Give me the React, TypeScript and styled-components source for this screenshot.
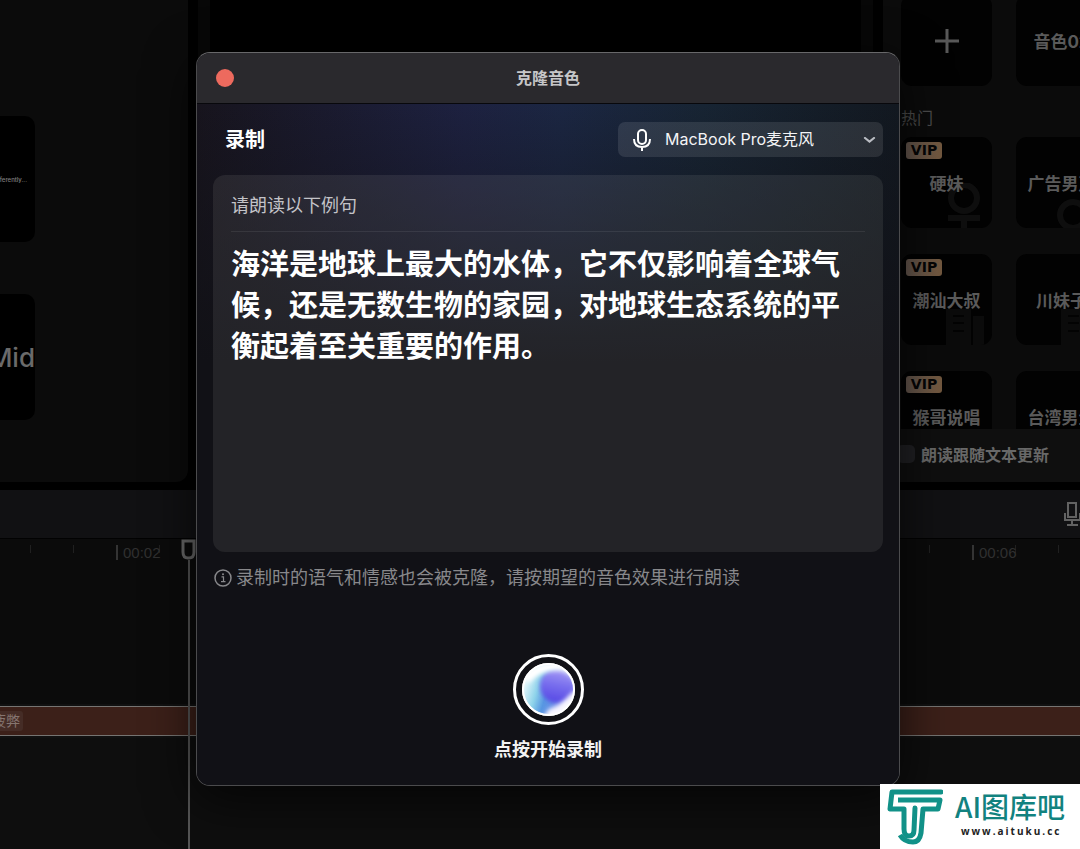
import React from "react";
import styled, { createGlobalStyle, css } from "styled-components";

const GlobalStyle = createGlobalStyle`
  *, *::before, *::after { box-sizing: border-box; }
  html, body, #root { height: 100%; }
  body {
    margin: 0;
    background: #000;
    color: #fff;
    font-family: Inter, "Noto Sans CJK SC", sans-serif;
    overflow: hidden;
  }
  button, select, input { font: inherit; color: inherit; }
  p, h1, h2, ul { margin: 0; padding: 0; }
`;

/* ---------- editor behind the dialog ---------- */

const Editor = styled.div`
  position: relative;
  display: flex;
  flex-direction: column;
  min-height: 100vh;
  overflow: hidden;
`;

const Workspace = styled.div`
  display: flex;
  gap: 10px;
  margin-bottom: 8px;
`;

const MediaPanel = styled.section`
  flex: 0 0 188px;
  display: flex;
  flex-direction: column;
  gap: 52px;
  padding: 116px 0 62px;
  background: #0b0b0b;
  border-bottom-right-radius: 12px;
`;

const Thumb = styled.div<{ $large?: boolean }>`
  display: flex;
  align-items: center;
  justify-content: flex-end;
  width: 35px;
  height: 126px;
  overflow: hidden;
  white-space: nowrap;
  background: #000;
  border-radius: 0 10px 10px 0;
  color: ${(p) => (p.$large ? "#6a6a6a" : "#808080")};
  font-size: ${(p) => (p.$large ? 26 : 6)}px;
  font-weight: 500;
  padding-right: ${(p) => (p.$large ? 0 : 8)}px;
`;

const Player = styled.section`
  flex: 1;
  padding: 0 12px;
  background: #070707;
`;

const Screen = styled.div`
  height: 100%;
  background: #000;
`;

const VoicePanel = styled.section`
  flex: 0 0 197px;
  display: flex;
  flex-direction: column;
  overflow: hidden;
  background: #0b0b0b;
`;

const VoiceScroll = styled.div`
  flex: 1 1 0;
  min-height: 0;
  overflow: hidden;
  padding-left: 18px;
`;

const VoiceGrid = styled.div<{ $first?: boolean }>`
  display: grid;
  grid-template-columns: repeat(2, 91px);
  gap: 26px 24px;
  margin-top: ${(p) => (p.$first ? -5 : 0)}px;
`;

const VoiceCard = styled.button`
  position: relative;
  display: flex;
  align-items: center;
  justify-content: center;
  height: 91px;
  padding: 0;
  border: 0;
  border-radius: 11px;
  overflow: hidden;
  white-space: nowrap;
  background: #020202;
  color: #5a5a5a;
  font-size: 17px;
  font-weight: 700;
`;

const VoiceName = styled.span`
  position: relative;
`;

const VipBadge = styled.span`
  position: absolute;
  top: 5px;
  left: 5px;
  width: 36px;
  height: 17px;
  border-radius: 3px;
  background: linear-gradient(90deg, #65574e, #74593f);
  color: #050505;
  font: bold 14px/17px "DejaVu Sans", sans-serif;
  text-align: center;
`;

const Ghost = styled.svg`
  position: absolute;
  right: 6px;
  bottom: 0;
`;

const GroupTitle = styled.h2`
  height: 51px;
  padding-top: 20px;
  color: #4c4c4c;
  font-size: 16px;
  line-height: 24px;
  font-weight: 400;
`;

const FollowText = styled.label`
  display: flex;
  align-items: center;
  gap: 6px;
  height: 53px;
  padding: 0 0 3px 14px;
  background: #0f0f0f;
  color: #686868;
  font-size: 16px;
  font-weight: 700;
  white-space: nowrap;
`;

const FollowBox = styled.input`
  appearance: none;
  width: 18px;
  height: 18px;
  margin: 0;
  border-radius: 5px;
  background: #202023;
`;

/* ---------- timeline ---------- */

const Timeline = styled.section`
  position: relative;
  flex: 1;
  display: flex;
  flex-direction: column;
  background: #0b0b0b;
`;

const Toolbar = styled.div`
  display: flex;
  align-items: center;
  justify-content: flex-end;
  height: 49px;
  background: #111113;
  border-bottom: 1px solid #020202;
`;

const ToolButton = styled.button`
  display: flex;
  padding: 0;
  border: 0;
  background: none;
  color: #626262;
`;

const Ruler = styled.div`
  display: flex;
  height: 165px;
  margin-left: -98px;
  padding-top: 6px;
`;

const Second = styled.div`
  position: relative;
  flex: 0 0 214px;
  display: grid;
  grid-template-columns: repeat(5, 1fr);
`;

const Tick = styled.span<{ $major?: boolean }>`
  height: ${(p) => (p.$major ? 15 : 8)}px;
  border-left: ${(p) => (p.$major ? "2px solid #343434" : "1px solid #202020")};
`;

const TimeLabel = styled.span`
  position: absolute;
  left: 7px;
  top: 0;
  color: #303030;
  font-size: 15px;
  line-height: 16px;
  font-family: "Liberation Sans", sans-serif;
`;

const Track = styled.div`
  padding: 2px 0;
  background: #111;
`;

const Clip = styled.div`
  display: flex;
  align-items: center;
  height: 30px;
  border: 1px solid #767472;
  border-width: 1px 0;
  background: #3c2019;
`;

const ClipName = styled.span`
  margin-left: -8px;
  padding-right: 3px;
  border-radius: 3px;
  background: #452c26;
  color: #857570;
  font-size: 14px;
  line-height: 20px;
`;

const EmptyTrack = styled.div`
  flex: 1;
  background: #0e0e0e;
`;

const Playhead = styled.div`
  position: absolute;
  top: 49px;
  bottom: 0;
  left: 181px;
  display: flex;
  flex-direction: column;
  align-items: center;

  &::after {
    content: "";
    flex: 1;
    width: 2px;
    background: #555;
  }
`;

/* ---------- dialog ---------- */

const Overlay = styled.div`
  position: absolute;
  inset: 0;
  display: flex;
  align-items: flex-start;
  padding: 52px 180px 0 196px;
`;

const Dialog = styled.div`
  flex: 1;
  overflow: hidden;
  border: 1px solid #4b4b4d;
  border-top-color: #68686a;
  border-radius: 14px;
  background: #111116;
  box-shadow: 0 12px 50px rgba(0, 0, 0, 0.7);
`;

const TitleBar = styled.header`
  display: grid;
  grid-template-columns: 1fr auto 1fr;
  align-items: center;
  height: 51px;
  padding: 0 19px;
  background: #2a292d;
  border-bottom: 1px solid #08080c;
`;

const CloseButton = styled.button`
  width: 18px;
  height: 18px;
  padding: 0;
  border: 0;
  border-radius: 50%;
  background: #ed6a5e;
`;

const Title = styled.h1`
  color: #c6c6c8;
  font-size: 16px;
  line-height: 24px;
  font-weight: 700;
`;

const DialogBody = styled.main`
  display: flex;
  flex-direction: column;
  padding: 18px 16px 22px;
  background: linear-gradient(to bottom, rgba(17, 17, 22, 0), #111116 38%),
    linear-gradient(
      to right,
      #17141d,
      #1a1a2e 18%,
      #1d2140 38%,
      #1b2642 52%,
      #172433 72%,
      #121820
    );
`;

const SectionHead = styled.div`
  display: flex;
  align-items: center;
  justify-content: space-between;
  margin-bottom: 18px;
  padding-left: 12px;
`;

const SectionTitle = styled.h2`
  font-size: 20px;
  line-height: 30px;
  font-weight: 700;
`;

const MicPicker = styled.label`
  position: relative;
  display: flex;
  align-items: center;
  width: 265px;
  height: 35px;
  border-radius: 7px;
  background: rgba(255, 255, 255, 0.1);

  svg {
    position: absolute;
    pointer-events: none;
  }
  svg:first-child { left: 15px; }
  svg:last-child { right: 7px; }
`;

const MicSelect = styled.select`
  appearance: none;
  width: 100%;
  height: 100%;
  padding: 0 30px 2px 47px;
  border: 0;
  background: none;
  color: #f4f4f6;
  font-size: 16px;
`;

const panelText = css`
  font-size: 18px;
  line-height: 26px;
`;

const ScriptCard = styled.section`
  min-height: 377px;
  padding: 18px 18px;
  border-radius: 12px;
  background: rgba(255, 255, 240, 0.08);
`;

const ScriptHint = styled.p`
  ${panelText}
  padding-bottom: 12px;
  border-bottom: 1px solid rgba(255, 255, 255, 0.08);
  color: #c3c3c8;
`;

const ScriptText = styled.p`
  padding-top: 12px;
  font-size: 29px;
  line-height: 41px;
  font-weight: 700;
`;

const Notice = styled.p`
  ${panelText}
  display: flex;
  align-items: center;
  gap: 4px;
  margin-top: 13px;
  padding-left: 1px;
  color: #88888b;

  svg { flex: none; }
`;

const Recorder = styled.div`
  display: flex;
  flex-direction: column;
  align-items: center;
  gap: 12px;
  margin-top: 63px;
  font-size: 18px;
  line-height: 26px;
  font-weight: 500;
`;

const RecordLabel = styled.span`
  font-weight: 700;
  color: #f2f2f2;
`;

const RecordButton = styled.button`
  display: flex;
  align-items: center;
  justify-content: center;
  width: 71px;
  height: 71px;
  padding: 0;
  border: 3px solid #fff;
  border-radius: 50%;
  background: none;
`;

/* ---------- site mark ---------- */

const SiteMark = styled.aside`
  position: absolute;
  right: 0;
  bottom: 0;
  display: flex;
  align-items: flex-start;
  gap: 12px;
  width: 200px;
  height: 65px;
  padding: 4px 0 0 7px;
  background: #fff;
`;

const SiteName = styled.strong`
  display: block;
  color: #12827f;
  font: 500 28px/36px "Noto Sans CJK SC", sans-serif;
  white-space: nowrap;
`;

const SiteLink = styled.a`
  display: block;
  padding-left: 6px;
  color: #222;
  font: bold 10px/14px "Open Sans", sans-serif;
  letter-spacing: 2px;
  text-decoration: none;
`;

/* ---------- drawings ---------- */

const WomanGhost = () => (
  <Ghost width="44" height="45" viewBox="0 0 44 45" fill="none" stroke="#0e0e0e" strokeWidth="6">
    <circle cx="22" cy="15" r="13" />
    <path d="M6 35h32M22 35v12" />
  </Ghost>
);

const CurlGhost = () => (
  <Ghost width="44" height="45" viewBox="0 0 44 45" fill="none" stroke="#0e0e0e" strokeWidth="6">
    <circle cx="16" cy="32" r="13" />
  </Ghost>
);

const BuildingGhost = () => (
  <Ghost width="41" height="38" viewBox="0 0 41 38" fill="#0b0b0b">
    <path d="M1 2h25v36H1z M28 9h11v29H28z" />
    <path d="M8 9h11M8 16h11M8 24h11" stroke="#030303" strokeWidth="2" />
  </Ghost>
);

const ghosts = { woman: WomanGhost, curl: CurlGhost, building: BuildingGhost };

const LogoT = () => (
  <svg width="56" height="59" viewBox="0 0 56 59" fill="none" stroke="#119188" strokeWidth="5" strokeLinejoin="round">
    <path d="M54 4H5L3 21h14v20c0 5 2 7 5 7s5-2 5-6l1-22" strokeLinecap="round" />
    <path d="M11 12h42l-2 9H36l-2 24c-1 6-4 9-8 9-6 0-10-2-13-7" />
  </svg>
);

type Voice = { name: string; vip?: boolean; ghost?: keyof typeof ghosts };

const voices: Voice[] = [
  { name: "硬妹", vip: true, ghost: "woman" },
  { name: "广告男声", ghost: "curl" },
  { name: "潮汕大叔", vip: true, ghost: "building" },
  { name: "川妹子", ghost: "building" },
  { name: "猴哥说唱", vip: true },
  { name: "台湾男生" },
];

const seconds = ["", "00:02", "", "", "", "00:06"];

export default function App() {
  return (
    <>
      <GlobalStyle />
      <Editor>
        <Workspace>
          <MediaPanel>
            <Thumb>differently...</Thumb>
            <Thumb $large>Mid</Thumb>
          </MediaPanel>
          <Player>
            <Screen />
          </Player>
          <VoicePanel>
            <VoiceScroll>
              <VoiceGrid $first>
                <VoiceCard aria-label="+">
                  <svg width="24" height="24" viewBox="0 0 24 24" stroke="#585858" strokeWidth="3">
                    <path d="M12 0v24M0 12h24" />
                  </svg>
                </VoiceCard>
                <VoiceCard>音色02</VoiceCard>
              </VoiceGrid>
              <GroupTitle>热门</GroupTitle>
              <VoiceGrid>
                {voices.map((v) => {
                  const Drawing = v.ghost && ghosts[v.ghost];
                  return (
                    <VoiceCard key={v.name}>
                      {Drawing && <Drawing />}
                      {v.vip && <VipBadge>VIP</VipBadge>}
                      <VoiceName>{v.name}</VoiceName>
                    </VoiceCard>
                  );
                })}
              </VoiceGrid>
            </VoiceScroll>
            <FollowText>
              <FollowBox type="checkbox" />
              朗读跟随文本更新
            </FollowText>
          </VoicePanel>
        </Workspace>

        <Timeline>
          <Toolbar>
            <ToolButton aria-label="麦克风">
              <svg width="17" height="26" viewBox="0 0 17 26" fill="none" stroke="currentColor" strokeWidth="2">
                <path d="M5 2h8v14H5z M2 12v7h15v-7M9 19v5M4 24h11" />
              </svg>
            </ToolButton>
          </Toolbar>
          <Ruler>
            {seconds.map((label, i) => (
              <Second key={i}>
                <Tick $major />
                <Tick />
                <Tick />
                <Tick />
                <Tick />
                {label && <TimeLabel>{label}</TimeLabel>}
              </Second>
            ))}
          </Ruler>
          <Track>
            <Clip>
              <ClipName>疲弊</ClipName>
            </Clip>
          </Track>
          <EmptyTrack />
          <Playhead>
            <svg width="15" height="21" viewBox="0 0 15 21" fill="none" stroke="#6a6a6a" strokeWidth="3">
              <path d="M2 2h11v11c0 4-2 6-5 6h-1c-3 0-5-2-5-6z" />
            </svg>
          </Playhead>
        </Timeline>

        <Overlay>
          <Dialog role="dialog" aria-labelledby="dialog-title">
            <TitleBar>
              <CloseButton aria-label="关闭" />
              <Title id="dialog-title">克隆音色</Title>
            </TitleBar>
            <DialogBody>
              <SectionHead>
                <SectionTitle>录制</SectionTitle>
                <MicPicker>
                  <svg width="18" height="22" viewBox="0 0 18 22" fill="none" stroke="#fff" strokeWidth="2">
                    <rect x="5" y="1" width="8" height="14" rx="4" />
                    <path d="M1 10c0 5 3 8 8 8s8-3 8-8M9 18v4" />
                  </svg>
                  <MicSelect aria-label="麦克风">
                    <option>MacBook Pro麦克风</option>
                  </MicSelect>
                  <svg width="13" height="6" viewBox="0 0 13 6" fill="none" stroke="#b9bcc2" strokeWidth="2.200">
                    <path d="M2 1l4.500 3.500L11 1" strokeLinecap="round" />
                  </svg>
                </MicPicker>
              </SectionHead>
              <ScriptCard>
                <ScriptHint>请朗读以下例句</ScriptHint>
                <ScriptText>
                  海洋是地球上最大的水体，它不仅影响着全球气候，还是无数生物的家园，对地球生态系统的平衡起着至关重要的作用。
                </ScriptText>
              </ScriptCard>
              <Notice>
                <svg width="18" height="18" viewBox="0 0 18 18" fill="none" stroke="currentColor">
                  <circle cx="9" cy="9" r="8" strokeWidth="1.500" />
                  <path d="M7.500 7.800h2v4.700M7 12.700h4.500" strokeWidth="1.200" />
                  <circle cx="9" cy="5.300" r="1" fill="currentColor" stroke="none" />
                </svg>
                录制时的语气和情感也会被克隆，请按期望的音色效果进行朗读
              </Notice>
              <Recorder>
                <RecordButton aria-labelledby="record-label">
                  <svg width="53" height="53" viewBox="0 0 53 53">
                    <defs>
                      <clipPath id="orb">
                        <circle cx="26.500" cy="26.500" r="25" />
                      </clipPath>
                      <linearGradient id="sky" x1="0" y1="0.350" x2="1" y2="0.650">
                        <stop offset="0.050" stopColor="#e8f8fb" />
                        <stop offset="0.300" stopColor="#8ed3ea" />
                        <stop offset="0.480" stopColor="#5797e2" />
                        <stop offset="1" stopColor="#8f86f2" />
                      </linearGradient>
                      <linearGradient id="violet" x1="0.600" y1="0" x2="0.400" y2="1">
                        <stop offset="0" stopColor="#a79cf6" />
                        <stop offset="0.450" stopColor="#7a70ee" />
                        <stop offset="1" stopColor="#5546e4" />
                      </linearGradient>
                      <filter id="soft" x="-50%" y="-50%" width="200%" height="200%">
                        <feGaussianBlur stdDeviation="2" />
                      </filter>
                    </defs>
                    <circle cx="26.500" cy="26.500" r="26.500" fill="#fff" />
                    <g clipPath="url(#orb)">
                      <rect width="53" height="53" fill="url(#sky)" />
                      <circle cx="35" cy="23" r="17" fill="url(#violet)" filter="url(#soft)" />
                      <path d="M54 28C47 29 44 41 27 46L20 56H56Z" fill="#f8f6ff" filter="url(#soft)" />
                      <path d="M0 14Q16-6 54 0V22Q49 10 39 8Q20 6 7 20Z" fill="#fff" filter="url(#soft)" />
                    </g>
                    <circle cx="26.500" cy="26.500" r="25.500" fill="none" stroke="#fff" strokeWidth="2" />
                  </svg>
                </RecordButton>
                <RecordLabel id="record-label">点按开始录制</RecordLabel>
              </Recorder>
            </DialogBody>
          </Dialog>
        </Overlay>

        <SiteMark>
          <LogoT />
          <div>
            <SiteName>AI图库吧</SiteName>
            <SiteLink href="#">www.aituku.cc</SiteLink>
          </div>
        </SiteMark>
      </Editor>
    </>
  );
}
